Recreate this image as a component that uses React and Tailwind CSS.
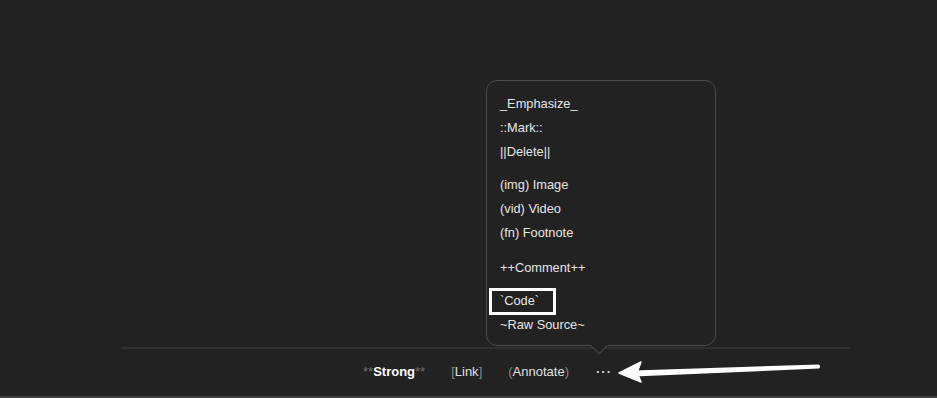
import React from "react";

const font = { fontFamily: '"Liberation Sans", Arial, sans-serif' };

function Item({ children, boxed }) {
  return (
    <div className="h-6 flex items-center pl-[13px] text-[12.8px] text-[#e6e6e6] relative">
      {boxed && (
        <div className="absolute left-[2px] top-[-1px] w-[67px] h-[27px] border-[3px] border-white" />
      )}
      <span className="relative">{children}</span>
    </div>
  );
}

export default function App() {
  return (
    <div className="relative w-full h-[398px] bg-[#222222] flex flex-col overflow-hidden" style={font}>
      <div className="flex-1" />
      <div className="ml-[121px] w-[729px] h-[2px] bg-[#303030]" />
      <div className="h-[47px] flex items-center pl-[363px] gap-[26px] text-[13px] pb-px">
        <span className="text-[#6e6e6e]">
          **<span className="text-white font-bold">Strong</span>**
        </span>
        <span className="text-[#8a8a8a]">
          [<span className="text-[#e0e0e0]">Link</span>]
        </span>
        <span className="text-[#8a8a8a]">
          (<span className="text-[#e0e0e0]">Annotate</span>)
        </span>
        <span className="text-[#d6d6d6] tracking-[1px] ml-px font-bold">···</span>
      </div>
      <div className="h-[2px] bg-[#3d3d3d]" />

      {/* popup menu */}
      <div className="absolute left-[486px] top-[80px] w-[230px] h-[266px] rounded-[11px] border border-[#4a4a4a] bg-[#222222] pt-[11px]">
        <Item>_Emphasize_</Item>
        <Item>::Mark::</Item>
        <Item>||Delete||</Item>
        <div className="h-[9px]" />
        <Item>(img) Image</Item>
        <Item>(vid) Video</Item>
        <Item>(fn) Footnote</Item>
        <div className="h-[11px]" />
        <Item>++Comment++</Item>
        <div className="h-[9px]" />
        <Item boxed>`Code`</Item>
        <Item>~Raw Source~</Item>
        <div className="absolute left-[106px] bottom-[-7px] w-3 h-3 rotate-45 bg-[#222222] border-r border-b border-[#4a4a4a]" />
      </div>

      {/* annotation arrow */}
      <svg className="absolute left-0 top-0" width="937" height="398" viewBox="0 0 937 398">
        <path d="M634 370.5 L819 364.5 Q821 366.5 819 368.5 L634 376.5 Z" fill="#ffffff" />
        <path d="M619 373 L641 362 L637 372.5 L641 382 Z" fill="#ffffff" stroke="#ffffff" strokeWidth="1.5" strokeLinejoin="round" />
      </svg>
    </div>
  );
}
